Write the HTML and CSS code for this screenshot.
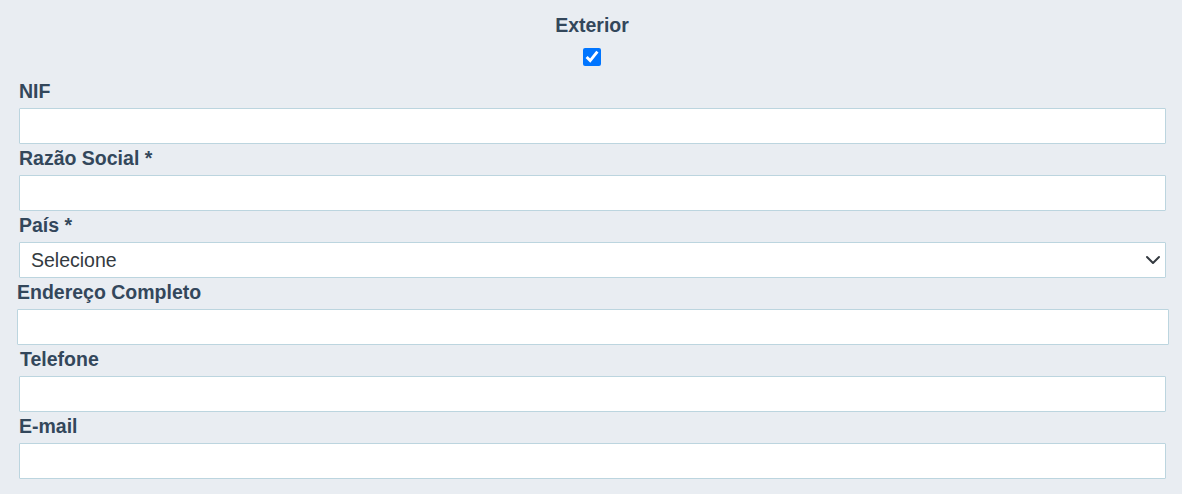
FILE: index.html
```html
<!DOCTYPE html>
<html lang="pt">
<head>
<meta charset="utf-8">
<title>Formulário</title>
<link rel="stylesheet" href="styles.css">
</head>
<body>
<form class="form">
  <div class="exterior">
    <label class="label label-center" for="exterior">Exterior</label>
    <input class="check" type="checkbox" id="exterior" checked>
  </div>
  <div class="group">
    <label class="label" for="nif">NIF</label>
    <input class="input" type="text" id="nif">
  </div>
  <div class="group">
    <label class="label" for="razao">Razão Social *</label>
    <input class="input" type="text" id="razao">
  </div>
  <div class="group">
    <label class="label" for="pais">País *</label>
    <div class="select-wrap">
      <select class="input select" id="pais">
        <option>Selecione</option>
      </select>
      <svg class="chevron" width="16" height="12" viewBox="0 2 16 12" aria-hidden="true"><path d="M2 5l6 6 6-6" fill="none" stroke="#343a40" stroke-width="2" stroke-linecap="round" stroke-linejoin="round"/></svg>
    </div>
  </div>
  <div class="group group-wide">
    <label class="label" for="endereco">Endereço Completo</label>
    <input class="input" type="text" id="endereco">
  </div>
  <div class="group">
    <label class="label label-shift" for="telefone">Telefone</label>
    <input class="input" type="text" id="telefone">
  </div>
  <div class="group">
    <label class="label" for="email">E-mail</label>
    <input class="input" type="text" id="email">
  </div>
</form>
</body>
</html>
```

FILE: styles.css
```css
html, body {
  margin: 0;
  padding: 0;
  background: #e9edf2;
}
body {
  font-family: "Liberation Sans", Arial, sans-serif;
  width: 1182px;
  height: 494px;
  overflow: hidden;
}
.form {
  box-sizing: border-box;
  padding: 14px 16px 0 19px;
  display: flex;
  flex-direction: column;
}
.exterior {
  display: flex;
  flex-direction: column;
  align-items: center;
  margin-left: -19px;
  margin-right: -16px;
  padding-left: 2px;
  margin-bottom: 14px;
}
.label {
  display: block;
  font-size: 19.5px;
  line-height: 23px;
  font-weight: bold;
  color: #33475b;
}
.label-center {
  text-align: center;
}
.label-shift {
  padding-left: 1px;
}
.check {
  width: 18px;
  height: 18px;
  margin: 11px 0 0 0;
  accent-color: #0075ff;
}
.group {
  display: flex;
  flex-direction: column;
  gap: 5px;
  margin-bottom: 3px;
}
.group-wide {
  margin-left: -2px;
  margin-right: -3px;
}
.input {
  box-sizing: border-box;
  height: 36px;
  width: 100%;
  margin: 0;
  border: 1px solid #bcd5df;
  border-radius: 1px;
  background: #ffffff;
  font-family: "Liberation Sans", Arial, sans-serif;
  font-size: 19.5px;
  color: #333a40;
  padding: 0 12px;
  outline: none;
}
.select-wrap {
  position: relative;
}
.select {
  appearance: none;
  -webkit-appearance: none;
  padding-left: 11px;
}
.chevron {
  position: absolute;
  right: 5px;
  top: 12px;
  pointer-events: none;
}
```
